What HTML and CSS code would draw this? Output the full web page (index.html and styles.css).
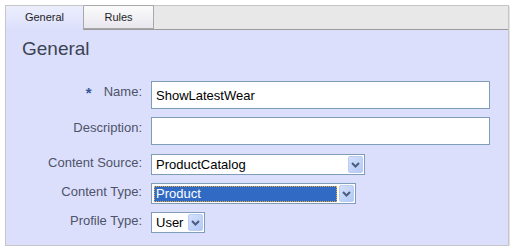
FILE: index.html
```html
<!DOCTYPE html>
<html lang="en">
<head>
    <meta charset="UTF-8">
    <title>General</title>
    <link rel="stylesheet" href="styles.css">
</head>
<body>

<div class="window">
    <div class="tabs">
        <div class="tab selected">General</div>
        <div class="tab">Rules</div>
    </div>

    <div class="panel">
        <h2>General</h2>

        <form class="form">
            <!-- Name -->
            <label class="label label-text"><span class="required">*</span>Name:</label>
            <div><input type="text" class="text-input" value="ShowLatestWear"></div>

            <!-- Description -->
            <label class="label label-text">Description:</label>
            <div><input type="text" class="text-input" value=""></div>

            <!-- Content Source -->
            <label class="label label-select first-select">Content Source:</label>
            <div class="first-select">
                <div class="select source">
                    <span class="select-value">ProductCatalog</span>
                    <span class="select-btn">
                        <svg width="15" height="17" viewBox="0 0 15 17"><path d="M4 7 L7.5 10.5 L11 7" fill="none" stroke="#4b5d80" stroke-width="2"/></svg>
                    </span>
                </div>
            </div>

            <!-- Content Type -->
            <label class="label label-select">Content Type:</label>
            <div>
                <div class="select type">
                    <span class="select-value focused">Product</span>
                    <span class="select-btn">
                        <svg width="15" height="17" viewBox="0 0 15 17"><path d="M4 7 L7.5 10.5 L11 7" fill="none" stroke="#4b5d80" stroke-width="2"/></svg>
                    </span>
                </div>
            </div>

            <!-- Profile Type -->
            <label class="label label-select">Profile Type:</label>
            <div>
                <div class="select profile">
                    <span class="select-value">User</span>
                    <span class="select-btn">
                        <svg width="15" height="17" viewBox="0 0 15 17"><path d="M4 7 L7.5 10.5 L11 7" fill="none" stroke="#4b5d80" stroke-width="2"/></svg>
                    </span>
                </div>
            </div>
        </form>
    </div>
</div>

</body>
</html>
```

FILE: styles.css
```css
body {
    margin: 0;
    background: #fff;
    font-family: Arial, "Liberation Sans", sans-serif;
}
.window {
    margin: 5px 0 0 5px;
    width: 502px;
    height: 239px;
    border: 1px solid #c6c6c6;
    box-shadow: 1px 1px 0 #e2e2e2;
    background: #dcdffc;
}
.tabs {
    display: flex;
    height: 23px;
    background: #e8e8e8;
    border-bottom: 1px solid #9a9a9a;
}
.tab {
    font-size: 11px;
    line-height: 23px;
    color: #1e1e1e;
    text-align: center;
    box-sizing: border-box;
}
.tab.selected {
    width: 78px;
    height: 24px;
    margin-bottom: -1px;
    border-right: 1px solid #a8a8a8;
    background: linear-gradient(#eceefd, #dcdffc);
}
.tab + .tab {
    width: 70px;
    margin-top: -1px;
    height: 24px;
    line-height: 23px;
    border: 1px solid #a8a8a8;
    border-left: none;
    background: linear-gradient(#fbfbfb, #e9e7ef);
}
.panel {
    padding: 8px 0 0 16px;
}
h2 {
    margin: 0;
    font-size: 19px;
    line-height: 22px;
    font-weight: normal;
    color: #3c4352;
}
.form {
    display: grid;
    grid-template-columns: 120px auto;
    column-gap: 9px;
    row-gap: 8px;
    margin-top: 21px;
}
.label {
    text-align: right;
    font-size: 13px;
    line-height: 15px;
    color: #4d5369;
}
.label-text {
    padding-top: 3px;
}
.label-select {
    padding-top: 1px;
}
.first-select {
    margin-top: 1px;
}
.required {
    color: #36579a;
    font-weight: bold;
    font-size: 15px;
    margin-right: 12px;
    vertical-align: -2px;
}
.text-input {
    display: block;
    box-sizing: border-box;
    width: 339px;
    height: 28px;
    margin: 0;
    padding: 0 0 0 4px;
    border: 1px solid #7f9db9;
    background: #fff;
    font-family: Arial, "Liberation Sans", sans-serif;
    font-size: 13px;
    color: #000;
    outline: none;
}
.select {
    display: flex;
    box-sizing: border-box;
    height: 21px;
    padding: 1px;
    border: 1px solid #7f9db9;
    background: #fff;
}
.select.source {
    width: 214px;
}
.select.type {
    width: 205px;
}
.select.profile {
    width: 54px;
}
.select-value {
    flex: 1;
    box-sizing: border-box;
    height: 16px;
    margin: 1px 2px 0 1px;
    padding-left: 1px;
    border: 1px solid transparent;
    font-size: 13px;
    line-height: 14px;
    color: #000;
    white-space: nowrap;
}
.select-value.focused {
    background: #316ac5;
    color: #fff;
    border: 1px dotted #e9a93a;
}
.select-btn {
    width: 15px;
    height: 17px;
    box-sizing: border-box;
    border: 1px solid #b9cdf6;
    border-radius: 2px;
    background: linear-gradient(135deg, #d4e1fc, #b3c9f5);
}
.select-btn svg {
    display: block;
    margin: -1px;
}
```
